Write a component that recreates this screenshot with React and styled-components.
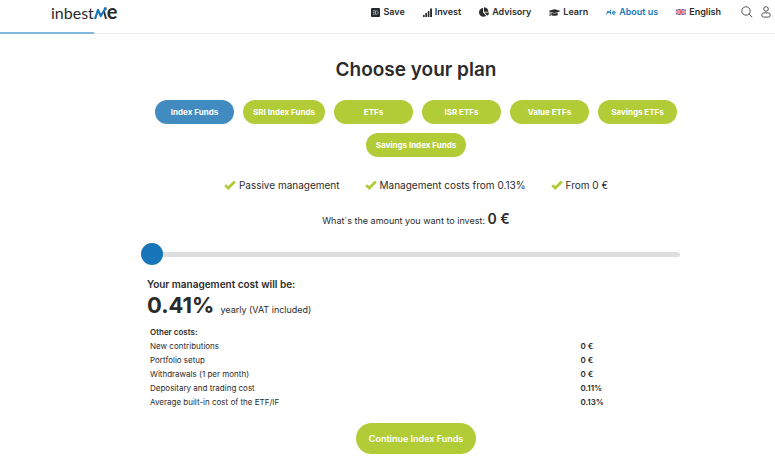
import { useState } from "react";
import styled, { createGlobalStyle } from "styled-components";
import { FaChartPie, FaGraduationCap } from "react-icons/fa";

const GlobalStyle = createGlobalStyle`
  * {
    box-sizing: border-box;
  }
  body {
    margin: 0;
    background-color: white;
    color: #2b2b2b;
    font-family: Inter, "Liberation Sans", sans-serif;
  }
  button, input {
    font-family: inherit;
  }
`;

const Header = styled.header`
  display: flex;
  align-items: center;
  justify-content: space-between;
  height: 34px;
  padding: 0 4px 9px 51px;
  border-bottom: 1px solid #ececec;
`;

const Progress = styled.div`
  width: 94px;
  height: 2px;
  margin-top: -2px;
  background-color: #7db9dc;
`;

const Logo = styled.a`
  display: flex;
  align-items: baseline;
  color: #2b2b2b;
  text-decoration: none;
  font-family: Lato, sans-serif;
  font-size: 16px;
  line-height: 24px;
`;

const LogoEnd = styled.span`
  font-size: 20px;
  font-weight: 700;
`;

const Nav = styled.nav`
  display: flex;
  align-items: center;
  gap: 18px;
`;

const NavLink = styled.a`
  display: flex;
  align-items: center;
  gap: 3px;
  color: ${(props) => (props.$active ? "#1775b8" : "#2b2b2b")};
  font-size: 9px;
  font-weight: 600;
  line-height: 16px;
  text-decoration: none;
  white-space: nowrap;
`;

const Tools = styled.div`
  display: flex;
  gap: 8px;
  padding-left: 2px;
`;

const IconButton = styled.button`
  display: flex;
  padding: 0;
  border: none;
  background: none;
  cursor: pointer;
`;

const Main = styled.main`
  padding: 22px 84px 6px 141px;
`;

const Title = styled.h1`
  margin: 0 0 16px;
  font-size: 19px;
  font-weight: 600;
  line-height: 28px;
  text-align: center;
`;

const Plans = styled.div`
  display: flex;
  flex-wrap: wrap;
  justify-content: center;
  gap: 9px;
`;

const PlanButton = styled.button`
  min-width: 79px;
  height: 24px;
  padding: 0 10px;
  border: none;
  border-radius: 12px;
  background-color: ${(props) => (props.$active ? "#428bc1" : "#b2cc38")};
  color: white;
  font-size: 8px;
  font-weight: 700;
  cursor: pointer;
`;

const Features = styled.ul`
  display: flex;
  justify-content: center;
  gap: 25px;
  margin: 20px 0 15px;
  padding: 0;
  list-style: none;
`;

const Feature = styled.li`
  display: flex;
  align-items: center;
  gap: 3px;
  font-size: 10px;
  line-height: 16px;
`;

const AmountLabel = styled.label`
  display: block;
  font-size: 9px;
  line-height: 22px;
  text-align: center;
`;

const Amount = styled.b`
  font-size: 14px;
  font-weight: 600;
`;

const Slider = styled.input`
  display: block;
  appearance: none;
  width: calc(100% - 11px);
  height: 22px;
  margin: 11px 0;
  background: transparent;
  cursor: pointer;
  &::-webkit-slider-runnable-track {
    height: 5px;
    border-radius: 3px;
    background-color: #dedede;
  }
  &::-webkit-slider-thumb {
    appearance: none;
    width: 22px;
    height: 22px;
    margin-top: -9px;
    border-radius: 50%;
    background-color: #1775b8;
  }
`;

const Costs = styled.section`
  padding: 0 6px;
`;

const CostTitle = styled.h2`
  margin: 0;
  font-size: 10px;
  font-weight: 600;
  line-height: 16px;
`;

const Cost = styled.p`
  display: flex;
  align-items: baseline;
  gap: 6px;
  margin: 0 0 2px;
  font-size: 9px;
  line-height: 26px;
`;

const CostValue = styled.b`
  font-size: 22px;
  font-weight: 700;
`;

const CostTable = styled.table`
  width: 100%;
  border-collapse: collapse;
  table-layout: fixed;
  font-size: 8px;
  line-height: 14px;
  caption {
    padding: 0 3px;
    font-weight: 600;
    text-align: left;
  }
  th, td {
    padding: 0 3px;
    font-weight: 400;
    text-align: left;
  }
  th {
    width: 80%;
  }
  td {
    font-weight: 600;
  }
`;

const ContinueButton = styled.button`
  display: block;
  height: 31px;
  margin: 14px auto 0;
  padding: 0 13px;
  border: none;
  border-radius: 16px;
  background-color: #b2cc38;
  color: white;
  font-size: 9px;
  font-weight: 600;
  cursor: pointer;
`;

const LogoMark = () => (
  <svg width="13" height="12" viewBox="0 0 13 12" fill="none" aria-hidden="true">
    <path d="M10 4L12 12" stroke="#2b2b2b" strokeWidth="1.8" />
    <path d="M1 12L4 3L6.8 9L11.4 1.6" stroke="#1775b8" strokeWidth="2.2" strokeLinejoin="round" />
    <circle cx="11.3" cy="1.5" r="1.5" fill="#1775b8" />
  </svg>
);

const SafeIcon = () => (
  <svg width="9" height="9" viewBox="0 0 9 9" fill="none" aria-hidden="true">
    <rect width="9" height="9" rx="1" fill="#242a30" />
    <path d="M1.8 2.8H4M1.8 4.5H3.5M1.8 6.2H4" stroke="#b9c1c8" strokeWidth=".8" />
    <path d="M4.5 2.8H5.4C7.8 2.8 7.8 6.2 5.4 6.2H4.5Z" stroke="#b9c1c8" strokeWidth=".8" />
  </svg>
);

const BarsIcon = () => (
  <svg width="9" height="9" viewBox="0 0 9 9" fill="#2b2b2b" aria-hidden="true">
    <path d="M0 7H1.7V9H0Z M2.3 5H4V9H2.3Z M4.7 3H6.4V9H4.7Z M7.1 0.5H9V9H7.1Z" />
  </svg>
);

const CheckIcon = () => (
  <svg width="12" height="10" viewBox="0 0 12 10" fill="none" aria-hidden="true">
    <path d="M1.2 5.2L4.3 8L10.8 1.6" stroke="#b2cc38" strokeWidth="2.8" />
  </svg>
);

const MeIcon = () => (
  <svg width="10" height="6" viewBox="0 0 10 6" fill="none" stroke="#1775b8" aria-hidden="true">
    <path d="M.5 5.5 L2 2 L3 4 L5 .5 M4.3 2.5 L5 5.5" />
    <path d="M6.5 3.8H9.2C9.2 1.7 6.4 1.7 6.4 3.7C6.4 5.4 8.3 5.6 9.2 4.9" />
  </svg>
);

const FlagIcon = () => (
  <svg width="10" height="6" viewBox="0 0 10 6" aria-hidden="true">
    <rect width="10" height="6" fill="#4c62a5" />
    <path d="M0 0L10 6M10 0L0 6" stroke="#e9dfe8" strokeWidth="1.2" />
    <path d="M0 0L10 6M10 0L0 6" stroke="#d8475a" strokeWidth=".4" />
    <path d="M5 0V6M0 3H10" stroke="#fff" strokeWidth="2" />
    <path d="M5 0V6M0 3H10" stroke="#dc3348" strokeWidth="1.2" />
  </svg>
);

const SearchIcon = () => (
  <svg width="12" height="12" viewBox="0 0 12 12" fill="none" stroke="#444" aria-hidden="true">
    <circle cx="5" cy="5" r="4.2" strokeWidth=".9" />
    <path d="M8 8L11.3 11.3" strokeWidth=".9" />
  </svg>
);

const UserIcon = () => (
  <svg width="10" height="12" viewBox="0 0 10 12" fill="none" stroke="#444" aria-hidden="true">
    <circle cx="5" cy="3" r="2.3" strokeWidth=".9" />
    <rect x=".8" y="6.9" width="8.4" height="4.2" rx="2" strokeWidth=".9" />
  </svg>
);

const links = [
  { name: "Save", icon: <SafeIcon /> },
  { name: "Invest", icon: <BarsIcon /> },
  { name: "Advisory", icon: <FaChartPie size={10} /> },
  { name: "Learn", icon: <FaGraduationCap size={11} /> },
  { name: "About us", icon: <MeIcon />, active: true },
  { name: "English", icon: <FlagIcon /> },
];

const plans = [
  "Index Funds",
  "SRI Index Funds",
  "ETFs",
  "ISR ETFs",
  "Value ETFs",
  "Savings ETFs",
  "Savings Index Funds",
];

const features = ["Passive management", "Management costs from 0.13%", "From 0 €"];

const costs = [
  ["New contributions", "0 €"],
  ["Portfolio setup", "0 €"],
  ["Withdrawals (1 per month)", "0 €"],
  ["Depositary and trading cost", "0.11%"],
  ["Average built-in cost of the ETF/IF", "0.13%"],
];

const App = () => {
  const [plan, setPlan] = useState("Index Funds");
  const [amount, setAmount] = useState(0);

  return (
    <>
      <GlobalStyle />
      <Header>
        <Logo href="#">
          inbest
          <LogoMark />
          <LogoEnd>e</LogoEnd>
        </Logo>
        <Nav>
          {links.map((link) => (
            <NavLink href="#" key={link.name} $active={link.active}>
              {link.icon}
              {link.name}
            </NavLink>
          ))}
          <Tools>
            <IconButton aria-label="Search">
              <SearchIcon />
            </IconButton>
            <IconButton aria-label="Account">
              <UserIcon />
            </IconButton>
          </Tools>
        </Nav>
      </Header>
      <Progress />
      <Main>
        <Title>Choose your plan</Title>
        <Plans>
          {plans.map((name) => (
            <PlanButton key={name} $active={name === plan} onClick={() => setPlan(name)}>
              {name}
            </PlanButton>
          ))}
        </Plans>
        <Features>
          {features.map((feature) => (
            <Feature key={feature}>
              <CheckIcon />
              {feature}
            </Feature>
          ))}
        </Features>
        <AmountLabel htmlFor="amount">
          What`s the amount you want to invest: <Amount>{amount} €</Amount>
        </AmountLabel>
        <Slider
          id="amount"
          type="range"
          min="0"
          max="100000"
          step="1000"
          value={amount}
          onChange={(e) => setAmount(Number(e.target.value))}
        />
        <Costs>
          <CostTitle>Your management cost will be:</CostTitle>
          <Cost>
            <CostValue>0.41%</CostValue> yearly (VAT included)
          </Cost>
          <CostTable>
            <caption>Other costs:</caption>
            <tbody>
              {costs.map(([name, value]) => (
                <tr key={name}>
                  <th scope="row">{name}</th>
                  <td>{value}</td>
                </tr>
              ))}
            </tbody>
          </CostTable>
        </Costs>
        <ContinueButton>Continue {plan}</ContinueButton>
      </Main>
    </>
  );
};

export default App;
